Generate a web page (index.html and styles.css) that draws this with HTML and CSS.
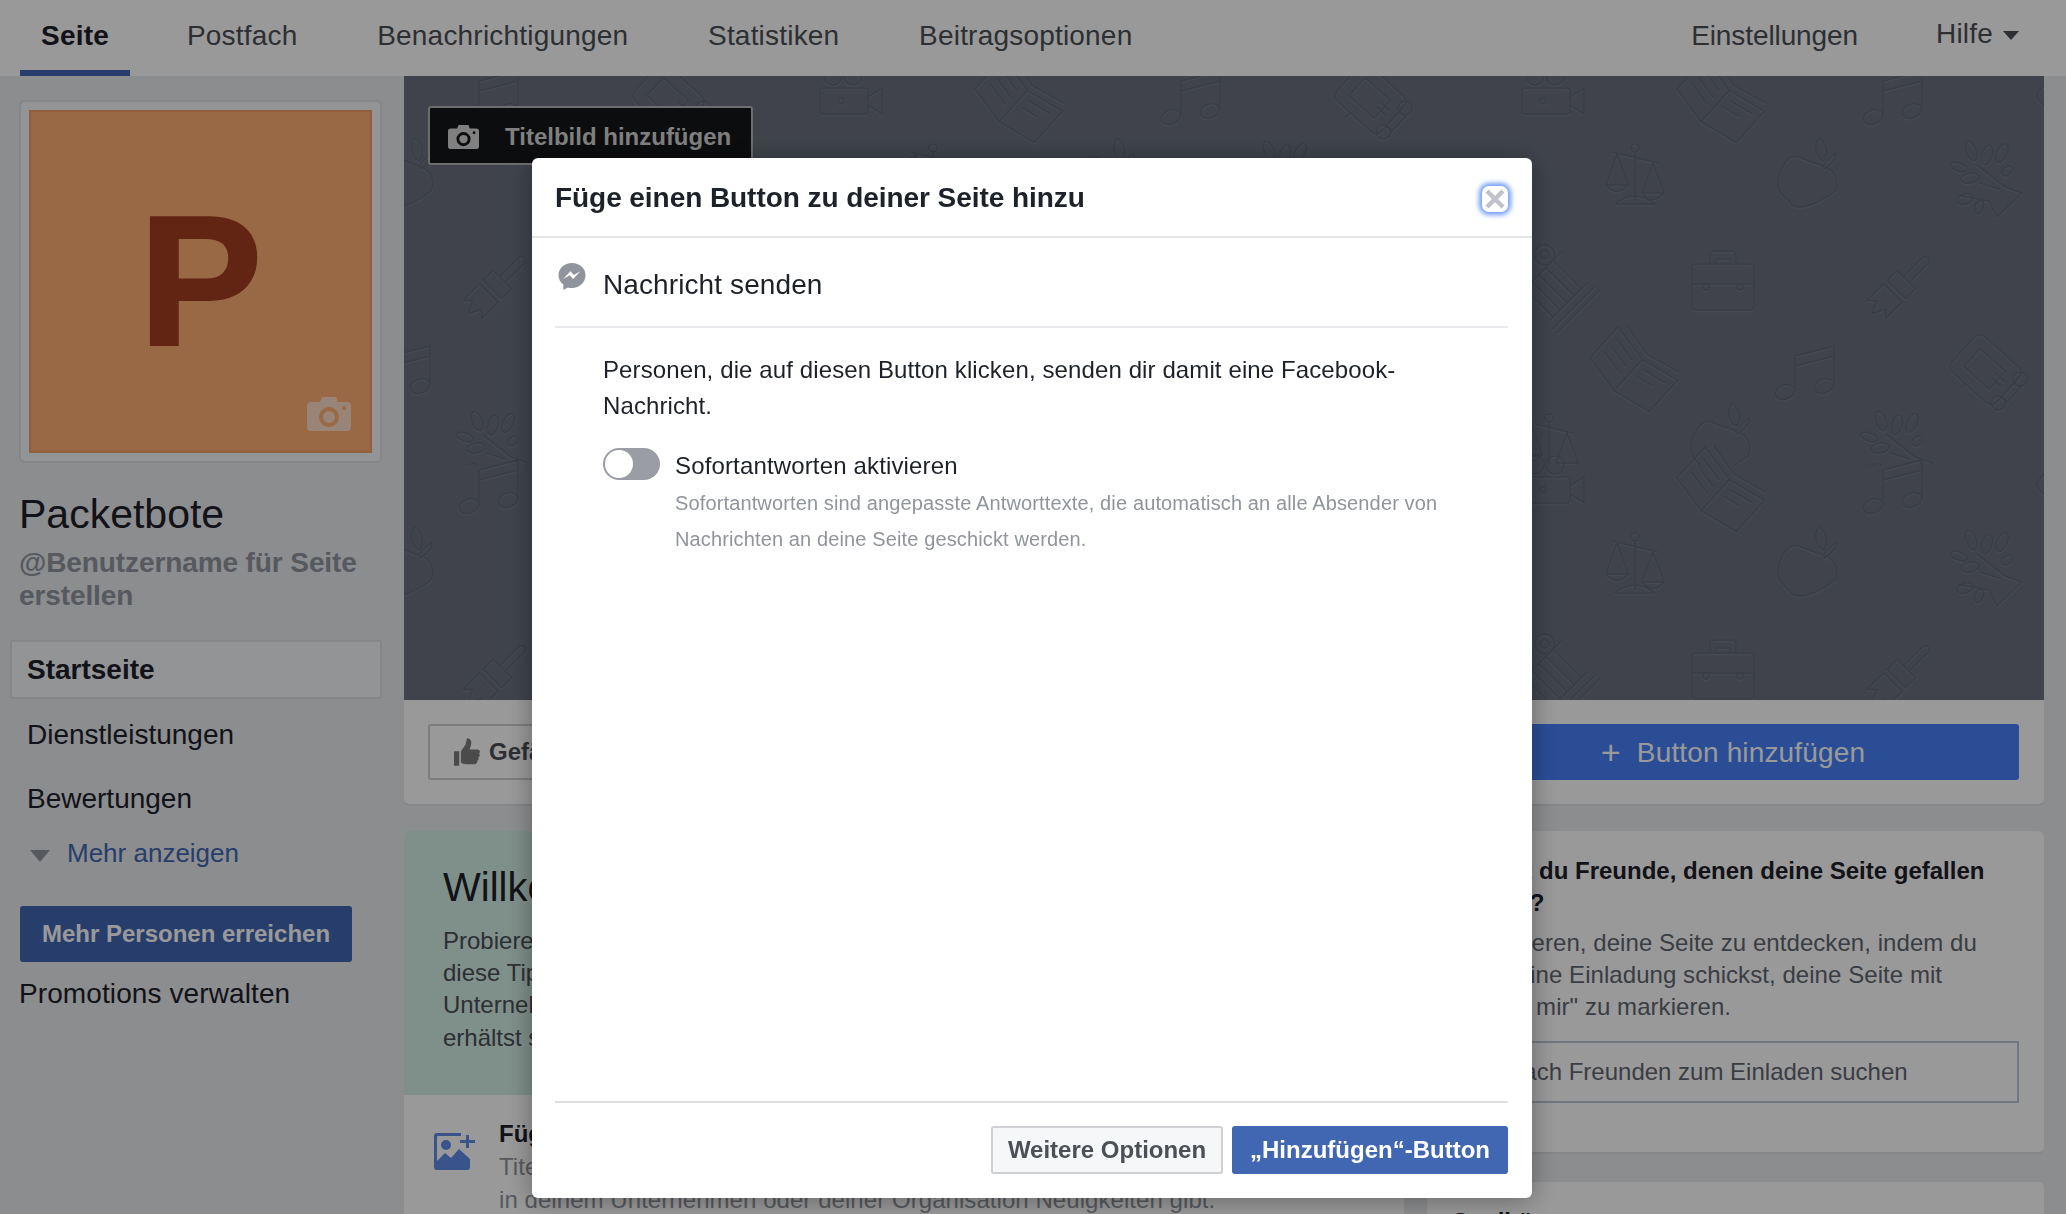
FILE: index.html
```html
<!DOCTYPE html>
<html lang="de">

<head>
    <meta charset="UTF-8">
    <title>Packetbote</title>
    <link rel="stylesheet" href="styles.css">
</head>

<body>
    <nav class="topnav">
        <a class="tab active">Seite</a>
        <a class="tab">Postfach</a>
        <a class="tab">Benachrichtigungen</a>
        <a class="tab">Statistiken</a>
        <a class="tab">Beitragsoptionen</a>
        <a class="tab tab-settings">Einstellungen</a>
        <a class="tab tab-help">Hilfe <span class="caret"></span></a>
    </nav>

    <div class="layout">
        <aside class="sidebar">
            <div class="profile-frame">
                <div class="profile-pic">
                    <span class="profile-letter">P</span>
                    <svg class="profile-camera" viewBox="0 0 44 34">
                        <path fill-rule="evenodd" d="M4 5h9l2-5h14l2 5h9a4 4 0 0 1 4 4v21a4 4 0 0 1-4 4H4a4 4 0 0 1-4-4V9a4 4 0 0 1 4-4zm18 5a10 10 0 1 0 0 20 10 10 0 0 0 0-20zm0 4a6 6 0 1 1 0 12 6 6 0 0 1 0-12zm15-5a2 2 0 1 0 0 4 2 2 0 0 0 0-4z" />
                    </svg>
                </div>
            </div>
            <h2 class="page-name">Packetbote</h2>
            <div class="page-handle">@Benutzername für Seite erstellen</div>
            <a class="side-item side-current">Startseite</a>
            <a class="side-item">Dienstleistungen</a>
            <a class="side-item">Bewertungen</a>
            <a class="side-more"><span class="more-arrow"></span>Mehr anzeigen</a>
            <button class="reach-btn">Mehr Personen erreichen</button>
            <a class="promo-link">Promotions verwalten</a>
        </aside>

        <main class="main">
            <div class="cover">
                <svg class="cover-pattern" width="100%" height="100%">
                    <defs>
                        <g id="i-music">
                            <path d="M-12 20V-15L27-25V14M-12-5L27-15" />
                            <ellipse cx="-22" cy="21" rx="10" ry="7" transform="rotate(-20 -22 21)" />
                            <ellipse cx="17" cy="15" rx="10" ry="7" transform="rotate(-20 17 15)" />
                        </g>
                        <g id="i-book" transform="rotate(42)">
                            <path d="M-40-22L0-14L40-22V20L0 28L-40 20Z" />
                            <path d="M-35-29L0-21L35-29M0-14V28" />
                            <path d="M-32-12L-8-7M-32-3L-8 2M-32 6L-8 11M8-7L32-12M8 2L24-1" />
                        </g>
                        <g id="i-scale">
                            <path d="M0-23V24M-20 28Q0 12 20 28ZM-23-24L23-13" />
                            <circle cx="0" cy="-28" r="4" />
                            <path d="M-18-22L-29 9H-7ZM18-13L7 17H29ZM-29 9Q-18 22-7 9M7 17Q18 30 29 17" />
                        </g>
                        <g id="i-apple">
                            <path d="M-8-22C-20-26-29-8-29 6C-28 16-20 19-15 26C-5 32 16 22 28 12C32 2 28-10 17-12C10-16 0-18-8-22Z" />
                            <path d="M13-20C6-28 9-38 12-41C18-36 22-28 17-18ZM17-14C22-22 28-24 29-26C30-20 24-14 17-10" />
                        </g>
                        <g id="i-tree">
                            <path d="M12 36L37 12L20 6L-8-16M-5 2L14 8M-28 14L4 20L12 36" />
                            <ellipse cx="-14" cy="-30" rx="5" ry="10" transform="rotate(-20 -14 -30)" />
                            <ellipse cx="2" cy="-26" rx="5" ry="10" transform="rotate(15 2 -26)" />
                            <ellipse cx="17" cy="-28" rx="5" ry="10" transform="rotate(25 17 -28)" />
                            <ellipse cx="-26" cy="-14" rx="9" ry="4" transform="rotate(20 -26 -14)" />
                            <ellipse cx="-15" cy="-3" rx="9" ry="5" transform="rotate(-10 -15 -3)" />
                            <ellipse cx="-20" cy="18" rx="8" ry="5" transform="rotate(-20 -20 18)" />
                            <ellipse cx="-6" cy="26" rx="4" ry="7" transform="rotate(20 -6 26)" />
                            <ellipse cx="22" cy="-10" rx="6" ry="4" transform="rotate(-40 22 -10)" />
                        </g>
                        <g id="i-case">
                            <rect x="-31" y="-17" width="62" height="46" rx="4" />
                            <path d="M-13-17V-25Q-13-30-8-30H8Q13-30 13-25V-17M-7-17V-22H7V-17M-31 3H31" />
                            <circle cx="-17" cy="6" r="3" />
                            <circle cx="17" cy="6" r="3" />
                        </g>
                        <g id="i-brush" transform="rotate(45)">
                            <path d="M-4-16V-44Q0-50 4-44V-16M-13-16H13V-2H-13ZM-13 3H13" />
                            <path d="M-13 3V26L-6 20L0 32L6 20L13 26V3" />
                        </g>
                        <g id="i-column" transform="rotate(-45)">
                            <path d="M-30-18H30M-30 30H30M-30 36H30M-22-18V22M-12-18V22M-2-18V22M8-18V22M18-18V22M-26 22H26" />
                            <circle cx="-16" cy="-28" r="10" />
                            <circle cx="16" cy="-28" r="10" />
                            <circle cx="16" cy="-28" r="4" />
                        </g>
                        <g id="i-car" transform="rotate(42)">
                            <rect x="-32" y="-24" width="60" height="48" rx="7" />
                            <path d="M-20-12H14V12H-20ZM28-10H36V10H28M-8 24V30M8-4L20-4M8 2L20 2" />
                            <circle cx="30" cy="-16" r="7" />
                            <circle cx="30" cy="16" r="7" />
                        </g>
                        <g id="i-video">
                            <rect x="-30" y="-12" width="48" height="26" rx="3" />
                            <path d="M18-3L32-12V14L18 5" />
                            <circle cx="-17" cy="-24" r="9" />
                            <circle cx="3" cy="-24" r="9" />
                            <circle cx="-9" cy="1" r="3" />
                        </g>
                        <g id="cover-icons" fill="none" stroke-width="1.6" stroke-linejoin="round" stroke-linecap="round">
                            <use href="#i-apple" x="614" y="368" />
                            <use href="#i-tree" x="87" y="375" />
                            <use href="#i-scale" x="443" y="370" />
                            <use href="#i-car" x="266" y="24" />
                            <use href="#i-video" x="446" y="24" />
                            <use href="#i-book" x="614" y="25" />
                            <use href="#i-music" x="87" y="20" />
                            <use href="#i-scale" x="529" y="100" />
                            <use href="#i-apple" x="701" y="103" />
                            <use href="#i-apple" x="-1" y="103" />
                            <use href="#i-tree" x="177" y="105" />
                            <use href="#i-column" x="447" y="210" />
                            <use href="#i-case" x="617" y="205" />
                            <use href="#i-brush" x="87" y="215" />
                            <use href="#i-book" x="527" y="294" />
                            <use href="#i-music" x="701" y="295" />
                            <use href="#i-music" x="-1" y="295" />
                            <use href="#i-car" x="179" y="295" />
                            <use href="#i-book" x="614" y="414" />
                            <use href="#i-music" x="87" y="409" />
                            <use href="#i-video" x="446" y="413" />
                        </g>
                        <pattern id="cover-tile" width="702" height="389" patternUnits="userSpaceOnUse">
                            <use href="#cover-icons" y="1.5" stroke="#737987" />
                            <use href="#cover-icons" stroke="#616774" />
                        </pattern>
                    </defs>
                    <rect width="100%" height="100%" fill="url(#cover-tile)" />
                </svg>
                <button class="cover-btn">
                    <svg class="cover-btn-icon" viewBox="0 0 44 34">
                        <path fill-rule="evenodd" d="M4 5h9l2-5h14l2 5h9a4 4 0 0 1 4 4v21a4 4 0 0 1-4 4H4a4 4 0 0 1-4-4V9a4 4 0 0 1 4-4zm18 5a10 10 0 1 0 0 20 10 10 0 0 0 0-20zm0 4a6 6 0 1 1 0 12 6 6 0 0 1 0-12zm15-5a2 2 0 1 0 0 4 2 2 0 0 0 0-4z" />
                    </svg>
                    Titelbild hinzufügen
                </button>
            </div>

            <div class="action-bar">
                <button class="like-btn">
                    <svg class="like-icon" viewBox="0 0 30 32">
                        <path d="M0 15h6v17H0zM8 15l5-7c1-2 1-5 2-8 3 0 5 2 5 5 0 3-1 5-2 8h9c2 0 3 1 3 3l-1 2c1 1 1 3-1 4 1 2 0 3-1 4 0 2-1 4-3 4H14c-3 0-4-1-6-2z" />
                    </svg>
                    Gefällt mir
                </button>
                <button class="add-btn"><span class="add-plus">+</span>Button hinzufügen</button>
            </div>

            <div class="columns">
                <section class="welcome-card">
                    <div class="welcome-top">
                        <h2 class="welcome-title">Willkommen auf deiner neuen Seite</h2>
                        <p class="welcome-text">Probiere diese Tipps aus, um loszulegen. Nutze<br>diese Tipps, um mehr über dein<br>Unternehmen zu erzählen, und du<br>erhältst schnell erste Reaktionen.</p>
                    </div>
                    <div class="tip-row">
                        <svg class="tip-icon" viewBox="0 0 42 37">
                            <path fill-rule="evenodd" d="M3 0h24v3H4a1 1 0 0 0-1 1v24l8-8 6 5 8-9 11 10V16h0v18a3 3 0 0 1-3 3H3a3 3 0 0 1-3-3V3a3 3 0 0 1 3-3zm9 7a5 5 0 1 1 0 10 5 5 0 0 1 0-10z" />
                            <path d="M32 2h3v5h6v3h-6v5h-3v-5h-6V7h6z" />
                        </svg>
                        <div>
                            <div class="tip-title">Füge ein Titelbild hinzu</div>
                            <p class="tip-text">Titelbilder helfen dabei, deine Seite zu zeigen und zu sagen, was es<br>in deinem Unternehmen oder deiner Organisation Neuigkeiten gibt.</p>
                        </div>
                    </div>
                </section>

                <div class="right-col">
                    <section class="invite-card">
                        <h3 class="invite-title">Kennst du Freunde, denen deine Seite gefallen<br>könnte?</h3>
                        <p class="invite-text">Interagieren, deine Seite zu entdecken, indem du<br>ihnen eine Einladung schickst, deine Seite mit<br>"Gefällt mir" zu markieren.</p>
                        <div class="invite-input">Nach Freunden zum Einladen suchen</div>
                    </section>
                    <section class="quality-card">
                        <h3 class="invite-title">Qualität</h3>
                    </section>
                </div>
            </div>
        </main>
    </div>

    <div class="overlay">
        <div class="modal">
            <header class="modal-head">
                <h2 class="modal-title">Füge einen Button zu deiner Seite hinzu</h2>
                <button class="modal-close">
                    <svg viewBox="0 0 24 24" class="close-x">
                        <path d="M4 4L20 20M20 4L4 20" />
                    </svg>
                </button>
            </header>
            <div class="modal-body">
                <div class="option-row">
                    <svg class="messenger-icon" viewBox="0 0 28 28">
                        <path d="M14 0C6.2 0 0 5.6 0 12.6c0 3.9 1.9 7.4 5 9.700V28l4.800-2.700c1.300.4 2.700.5 4.200.5 7.800 0 14-5.800 14-13.200S21.800 0 14 0z" />
                        <path class="messenger-bolt" d="M15.200 16.600l-3.600-3.800-6.800 3.800 7.500-8 3.700 3.800 6.700-3.800z" />
                    </svg>
                    <span class="option-name">Nachricht senden</span>
                </div>
                <div class="option-details">
                    <p class="option-text">Personen, die auf diesen Button klicken, senden dir damit eine Facebook-<br>Nachricht.</p>
                    <div class="switch-row">
                        <span class="switch"><span class="switch-knob"></span></span>
                        <div>
                            <div class="switch-label">Sofortantworten aktivieren</div>
                            <p class="switch-hint">Sofortantworten sind angepasste Antworttexte, die automatisch an alle Absender von<br>Nachrichten an deine Seite geschickt werden.</p>
                        </div>
                    </div>
                </div>
                <footer class="modal-foot">
                    <button class="btn-grey">Weitere Optionen</button>
                    <button class="btn-blue">„Hinzufügen“-Button</button>
                </footer>
            </div>
        </div>
    </div>
</body>

</html>
```

FILE: styles.css
```css
* {
    box-sizing: border-box;
}

html,
body {
    height: 100%;
}

body {
    margin: 0;
    overflow: hidden;
    font-family: "Liberation Sans", Arial, sans-serif;
    font-size: 28px;
    color: #1d2129;
    background-color: #e9ebee;
}

button {
    font-family: inherit;
    cursor: pointer;
}

p,
h2,
h3 {
    margin: 0;
}

/* top tabs */
.topnav {
    display: flex;
    height: 76px;
    padding-left: 20px;
    padding-right: 47px;
    background-color: #fff;
}

.tab {
    height: 76px;
    padding: 0 21px;
    margin-right: 37.7px;
    line-height: 72px;
    letter-spacing: 0.2px;
    color: #4b4f56;
}

.tab.active {
    margin-right: 36px;
    font-weight: bold;
    color: #1d2129;
    border-bottom: 6px solid #4267b2;
}

.tab-settings {
    margin-left: auto;
    margin-right: 36px;
    letter-spacing: -0.1px;
}

.tab-help {
    margin-right: 0;
    padding-right: 0;
    line-height: 68px;
}

.caret {
    display: inline-block;
    margin-left: 2px;
    vertical-align: 3px;
    border-top: 9px solid #4b4f56;
    border-left: 8px solid transparent;
    border-right: 8px solid transparent;
}

.layout {
    display: flex;
    height: 1138px;
    overflow: hidden;
}

/* left column */
.sidebar {
    width: 404px;
    flex-shrink: 0;
    padding: 24px 0 0 19px;
}

.profile-frame {
    width: 363px;
    height: 363px;
    padding: 8px 8px;
    background-color: #f6f7f8;
    border: 2px solid #dddfe2;
    border-radius: 6px;
}

.profile-pic {
    position: relative;
    display: flex;
    align-items: center;
    justify-content: center;
    height: 100%;
    background-color: #ffad73;
    border: 2px solid #eda06c;
}

.profile-letter {
    margin-bottom: 2px;
    font-size: 186px;
    font-weight: bold;
    line-height: 1;
    color: #a33f20;
    -webkit-text-stroke: 2px #a33f20;
}

.profile-camera {
    position: absolute;
    right: 19px;
    bottom: 20px;
    width: 44px;
    height: 34px;
    fill: rgba(255, 255, 255, 0.6);
}

.page-name {
    margin-top: 27px;
    font-size: 41px;
    font-weight: normal;
    line-height: 48px;
}

.page-handle {
    width: 370px;
    margin-top: 8px;
    font-size: 28px;
    font-weight: bold;
    line-height: 33px;
    letter-spacing: -0.1px;
    color: #90949c;
}

.side-item {
    display: block;
    height: 64px;
    margin-left: -9px;
    padding-left: 17px;
    line-height: 64px;
}

.side-current {
    width: 372px;
    height: 59px;
    margin-top: 28px;
    margin-bottom: 4px;
    padding-left: 15px;
    line-height: 56px;
    font-weight: bold;
    background-color: #f6f7f8;
    border: 2px solid #dddfe2;
    border-radius: 3px;
}

.side-more {
    display: flex;
    align-items: center;
    height: 40px;
    margin-top: 2px;
    font-size: 26px;
    color: #4267b2;
}

.more-arrow {
    margin: 6px 17px 0 11px;
    border-top: 12px solid #90949c;
    border-left: 10px solid transparent;
    border-right: 10px solid transparent;
}

.reach-btn {
    display: block;
    width: 332px;
    height: 56px;
    margin: 33px 0 0 1px;
    padding: 0;
    font-size: 24px;
    font-weight: bold;
    color: #fff;
    background-color: #4267b2;
    border: none;
    border-radius: 3px;
}

.promo-link {
    display: block;
    margin-top: 12px;
    line-height: 40px;
    letter-spacing: 0.1px;
}

/* cover and action bar */
.main {
    width: 1640px;
    flex-shrink: 0;
}

.cover {
    position: relative;
    height: 624px;
    padding: 30px 0 0 24px;
    background-color: #6b717f;
}

.cover-pattern {
    position: absolute;
    top: 0;
    left: 0;
}

.cover-btn {
    position: relative;
    display: flex;
    align-items: center;
    width: 325px;
    height: 59px;
    padding: 2px 0 0 18px;
    font-size: 24px;
    font-weight: bold;
    color: #d6d6d6;
    background-color: #15161a;
    border: 2px solid #b8b8ba;
    border-radius: 3px;
}

.cover-btn-icon {
    width: 31px;
    height: 24px;
    margin-right: 26px;
    fill: #d6d6d6;
}

.action-bar {
    display: flex;
    height: 106px;
    padding: 24px 25px 0 24px;
    background-color: #fff;
    border-bottom: 2px solid #dddfe2;
    border-radius: 0 0 6px 6px;
}

.like-btn {
    display: flex;
    align-items: center;
    width: 300px;
    height: 56px;
    padding: 0 0 0 24px;
    font-size: 24px;
    font-weight: bold;
    color: #4b4f56;
    background-color: #fff;
    border: 2px solid #ced0d4;
    border-radius: 3px;
}

.like-icon {
    width: 26px;
    height: 28px;
    margin-right: 9px;
    fill: #7d7d7f;
}

.add-btn {
    margin-left: auto;
    width: 572px;
    height: 56px;
    padding: 0;
    font-size: 28px;
    letter-spacing: 0.15px;
    color: #fff;
    background-color: #4680fa;
    border: none;
    border-radius: 3px;
}

.add-plus {
    margin-right: 16px;
    font-size: 34px;
    line-height: 1;
    vertical-align: -2px;
}

.columns {
    display: flex;
    gap: 23px;
    margin-top: 25px;
}

.welcome-card {
    width: 1000px;
    flex-shrink: 0;
    background-color: #fff;
    border-radius: 6px 6px 0 0;
}

.welcome-top {
    height: 264px;
    padding: 32px 0 0 39px;
    background-color: #d4eee6;
    border-radius: 6px 6px 0 0;
}

.welcome-title {
    font-size: 40px;
    font-weight: normal;
    line-height: 48px;
}

.welcome-text {
    margin-top: 14px;
    font-size: 24px;
    line-height: 32.2px;
    color: #4b4f56;
}

.tip-row {
    display: flex;
    gap: 23px;
    padding: 23px 0 0 30px;
}

.tip-icon {
    width: 42px;
    height: 37px;
    margin-top: 15px;
    flex-shrink: 0;
    fill: #5f8ae8;
}

.tip-title {
    font-size: 24px;
    font-weight: bold;
    line-height: 32px;
}

.tip-text {
    font-size: 24px;
    line-height: 33px;
    letter-spacing: 0.06px;
    color: #90949c;
}

.right-col {
    width: 617px;
    flex-shrink: 0;
}

.invite-card {
    height: 323px;
    padding: 24px 25px 0 24px;
    background-color: #fff;
    border-bottom: 2px solid #dddfe2;
    border-radius: 6px;
}

.invite-title {
    font-size: 24px;
    line-height: 32px;
}

.invite-text {
    margin-top: 8px;
    font-size: 24px;
    line-height: 32px;
    letter-spacing: 0.06px;
    color: #616770;
}

.invite-input {
    height: 62px;
    margin-top: 18px;
    padding-left: 53px;
    font-size: 24px;
    line-height: 58px;
    color: #616770;
    border: 2px solid #bdc7d8;
}

.quality-card {
    height: 100px;
    margin-top: 28px;
    padding: 24px 25px 0 24px;
    background-color: #fff;
    border-radius: 6px;
}

/* dialog */
.overlay {
    position: fixed;
    top: 0;
    left: 0;
    right: 0;
    bottom: 0;
    padding: 158px 0 16px 532px;
    background-color: rgba(0, 0, 0, 0.4);
}

.modal {
    display: flex;
    flex-direction: column;
    width: 1000px;
    height: 100%;
    background-color: #fff;
    border-radius: 6px;
    box-shadow: 0 2px 26px rgba(0, 0, 0, 0.35);
}

.modal-head {
    display: flex;
    align-items: center;
    justify-content: space-between;
    height: 80px;
    padding: 2px 24px 0 23px;
    border-bottom: 2px solid #e5e5e5;
}

.modal-title {
    font-size: 28px;
    font-weight: bold;
    line-height: 40px;
    letter-spacing: -0.06px;
}

.modal-close {
    display: flex;
    width: 26px;
    height: 26px;
    margin-top: 1px;
    padding: 1px;
    background-color: #fff;
    border: none;
    border-radius: 7px;
    box-shadow: 0 0 5px 3px #6f9cf6;
}

.close-x {
    width: 100%;
    height: 100%;
    fill: none;
    stroke: #bfc2c9;
    stroke-width: 4.5;
}

.modal-body {
    display: flex;
    flex-direction: column;
    flex: 1;
    padding: 0 24px 0 23px;
}

.option-row {
    display: flex;
    height: 90px;
    padding-top: 27px;
    border-bottom: 2px solid #e9e9ee;
}

.messenger-icon {
    width: 28px;
    height: 27px;
    margin: -2px 0 0 3px;
    fill: #90949c;
}

.messenger-bolt {
    fill: #fff;
}

.option-name {
    margin-left: 17px;
    line-height: 40px;
    letter-spacing: 0.1px;
}

.option-details {
    flex: 1;
    padding: 24px 0 0 48px;
}

.option-text {
    font-size: 24px;
    line-height: 36px;
    letter-spacing: 0.11px;
}

.switch-row {
    display: flex;
    gap: 15px;
    margin-top: 24px;
}

.switch {
    display: flex;
    width: 57px;
    height: 32px;
    padding: 2px;
    flex-shrink: 0;
    background-color: #9a9da3;
    border-radius: 16px;
}

.switch-knob {
    width: 28px;
    height: 28px;
    background-color: #fff;
    border-radius: 50%;
}

.switch-label {
    font-size: 24px;
    line-height: 36px;
    letter-spacing: 0.15px;
}

.switch-hint {
    margin-top: 1px;
    font-size: 20px;
    line-height: 36px;
    letter-spacing: 0.13px;
    color: #90949c;
}

.modal-foot {
    display: flex;
    justify-content: flex-end;
    gap: 9px;
    height: 97px;
    padding-top: 23px;
    border-top: 2px solid #dddfe2;
}

.btn-grey,
.btn-blue {
    height: 48px;
    padding: 0;
    font-size: 24px;
    font-weight: bold;
    border-radius: 3px;
}

.btn-grey {
    width: 232px;
    color: #4b4f56;
    background-color: #f6f7f9;
    border: 2px solid #ced0d4;
}

.btn-blue {
    width: 276px;
    color: #fff;
    background-color: #4267b2;
    border: none;
}
```
